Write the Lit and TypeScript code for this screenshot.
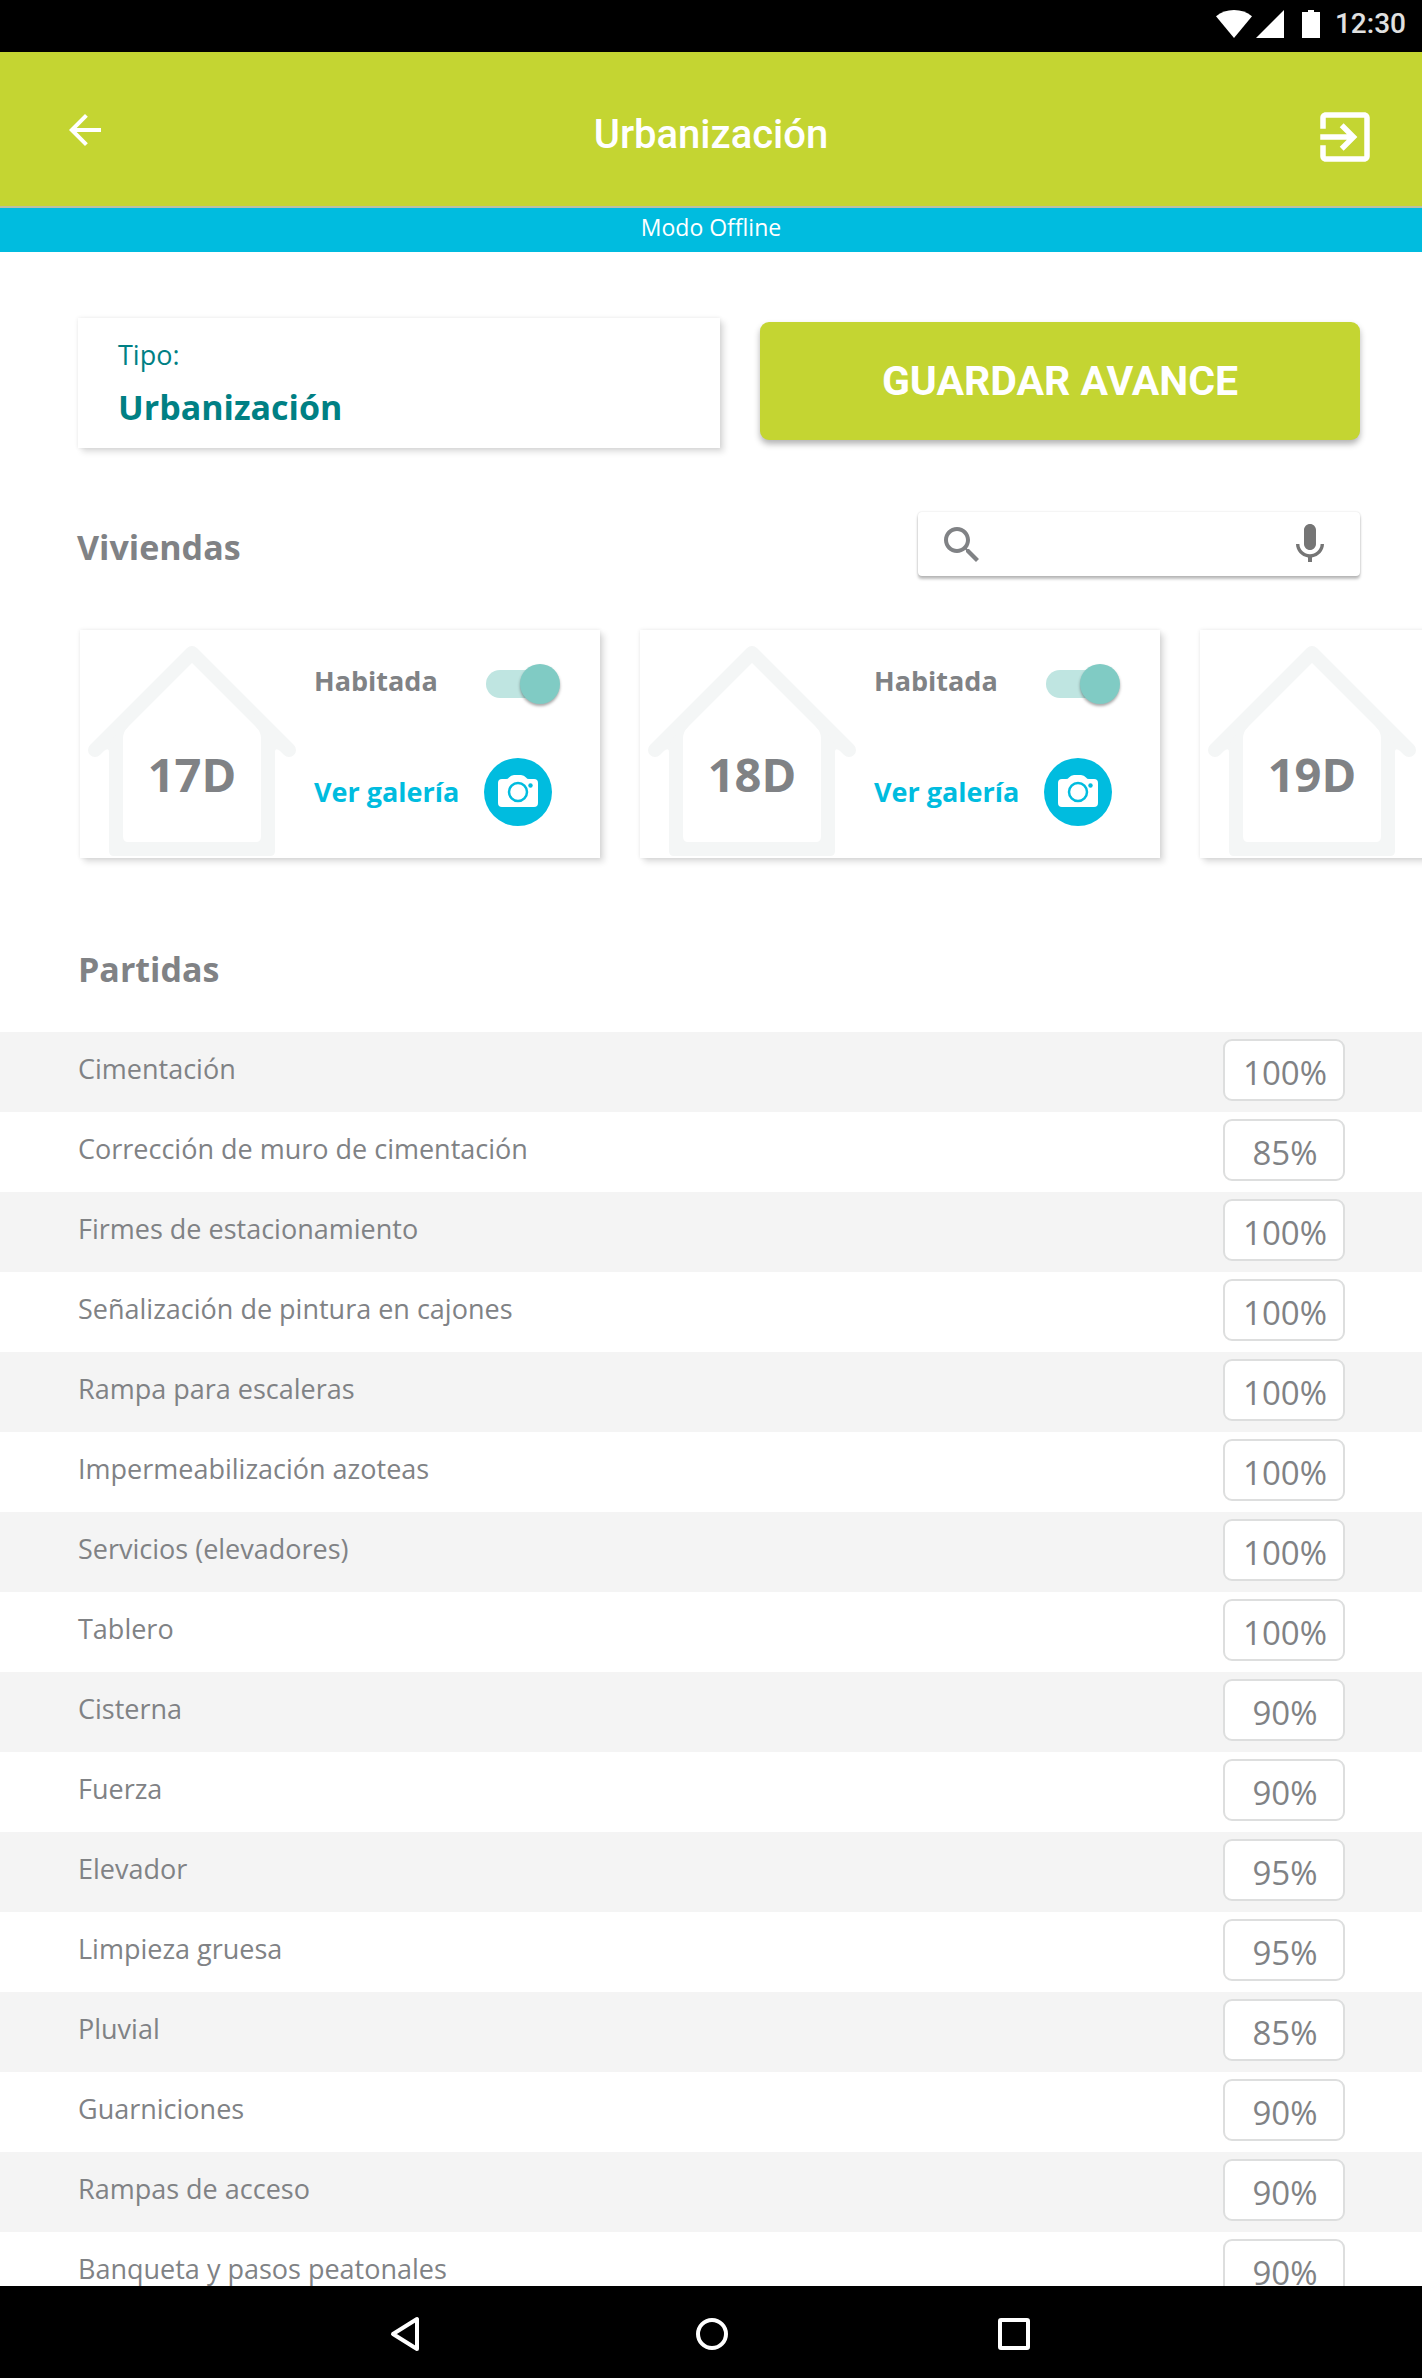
import { LitElement, html, css } from "lit";
import { customElement, property, state } from "lit/decorators.js";

interface Vivienda {
  id: string;
  habitada: boolean;
}

interface Partida {
  nombre: string;
  avance: string;
}

@customElement("status-bar")
export class StatusBar extends LitElement {
  static styles = css`
    :host {
      display: block;
      flex: none;
      background: #000;
      color: #e0e0e0;
    }
    .bar {
      display: flex;
      align-items: center;
      justify-content: flex-end;
      height: 52px;
      padding: 0 16px 4px 0;
      box-sizing: border-box;
      font: 500 28px/32px Roboto, sans-serif;
    }
    .wifi { margin-right: 4px; }
    .signal { margin-right: 18px; }
    .battery { margin-right: 15px; }
    svg { display: block; fill: #fff; }
  `;

  render() {
    return html`
      <div class="bar">
        <svg class="wifi" width="36" height="28" viewBox="0 0 36 28" aria-hidden="true">
          <path d="M18 28 0 6.2C5 2.2 11 0 18 0s13 2.2 18 6.2z" />
        </svg>
        <svg class="signal" width="28" height="28" viewBox="0 0 28 28" aria-hidden="true">
          <path d="M0 28h28V0z" />
        </svg>
        <svg class="battery" width="18" height="28" viewBox="0 0 18 28" aria-hidden="true">
          <path d="M0 2h6V0h6v2h6v26H0z" />
        </svg>
        <span>12:30</span>
      </div>
    `;
  }
}

@customElement("vivienda-card")
export class ViviendaCard extends LitElement {
  @property() name = "";
  @property({ type: Boolean }) habitada = false;

  static styles = css`
    :host {
      display: block;
      flex: none;
    }
    .card {
      display: flex;
      gap: 18px;
      width: 520px;
      height: 228px;
      box-sizing: border-box;
      padding-left: 8px;
      background: #fff;
      box-shadow: 4px 4px 6px rgba(0, 0, 0, 0.13), 0 0 4px rgba(0, 0, 0, 0.09);
      color: #808285;
      font: 700 27px/34px "Open Sans", sans-serif;
    }
    .house {
      display: grid;
      padding-top: 16px;
    }
    .house > * { grid-area: 1 / 1; }
    .number {
      justify-self: center;
      margin: 0;
      padding-top: 95px;
      font-size: 47px;
      line-height: 66px;
      font-weight: 700;
    }
    .controls {
      display: flex;
      flex-direction: column;
      gap: 54px;
      padding-top: 34px;
    }
    .switch,
    .gallery {
      display: grid;
      grid-template-columns: 170px auto;
      justify-items: start;
    }
    .gallery {
      align-items: center;
      color: #00bcdf;
      text-decoration: none;
    }
    .toggle {
      appearance: none;
      display: grid;
      align-items: center;
      width: 74px;
      height: 40px;
      margin: 0 0 0 2px;
    }
    .toggle::before,
    .toggle::after {
      content: "";
      grid-area: 1 / 1;
    }
    .toggle::before {
      width: 68px;
      height: 28px;
      border-radius: 14px;
      background: #d5d5d5;
    }
    .toggle::after {
      width: 40px;
      height: 40px;
      border-radius: 50%;
      background: #f1f1f1;
      box-shadow: 0 2px 3px rgba(0, 0, 0, 0.35);
    }
    .toggle:checked::before { background: #bfe5e1; }
    .toggle:checked::after {
      justify-self: end;
      background: #80cbc4;
    }
    svg { display: block; }
  `;

  render() {
    return html`
      <article class="card">
        <div class="house">
          <svg width="208" height="210" viewBox="0 0 208 210" aria-hidden="true">
            <path d="M7 104 104 7l97 97" fill="none" stroke="#f4f6f6" stroke-width="14"
              stroke-linecap="round" stroke-linejoin="round" />
            <path fill="#f4f6f6"
              d="M16 105q5-4 5 1v99q0 5 5 5h156q5 0 5-5v-99q0-5 5-1L160 60l8 21q5 5 5 11v98q0 6-5 6H40q-5 0-5-6V92q0-6 5-11l8-21z" />
          </svg>
          <h3 class="number">${this.name}</h3>
        </div>
        <div class="controls">
          <label class="switch">
            <span>Habitada</span>
            <input class="toggle" type="checkbox" role="switch" .checked=${this.habitada} />
          </label>
          <a class="gallery" href="#galeria">
            <span>Ver galería</span>
            <svg width="68" height="68" viewBox="0 0 68 68" aria-hidden="true">
              <circle cx="34" cy="34" r="34" fill="#00bcdf" />
              <path fill="#fff"
                d="M18 21h4q2 0 3-1.500q2-2.500 5-2.500h7q3 0 5 2.500q1 1.500 3 1.500h5q4 0 4 4v20q0 4-4 4H18q-4 0-4-4V25q0-4 4-4z" />
              <circle cx="34" cy="34" r="9" fill="none" stroke="#00bcdf" stroke-width="2.500" />
              <circle cx="46.500" cy="27.500" r="2.200" fill="#00bcdf" />
            </svg>
          </a>
        </div>
      </article>
    `;
  }
}

@customElement("app-root")
export class AppRoot extends LitElement {
  @state() private viviendas: Vivienda[] = [
    { id: "17D", habitada: true },
    { id: "18D", habitada: true },
    { id: "19D", habitada: true },
  ];

  @state() private partidas: Partida[] = [
    { nombre: "Cimentación", avance: "100%" },
    { nombre: "Corrección de muro de cimentación", avance: "85%" },
    { nombre: "Firmes de estacionamiento", avance: "100%" },
    { nombre: "Señalización de pintura en cajones", avance: "100%" },
    { nombre: "Rampa para escaleras", avance: "100%" },
    { nombre: "Impermeabilización azoteas", avance: "100%" },
    { nombre: "Servicios (elevadores)", avance: "100%" },
    { nombre: "Tablero", avance: "100%" },
    { nombre: "Cisterna", avance: "90%" },
    { nombre: "Fuerza", avance: "90%" },
    { nombre: "Elevador", avance: "95%" },
    { nombre: "Limpieza gruesa", avance: "95%" },
    { nombre: "Pluvial", avance: "85%" },
    { nombre: "Guarniciones", avance: "90%" },
    { nombre: "Rampas de acceso", avance: "90%" },
    { nombre: "Banqueta y pasos peatonales", avance: "90%" },
  ];

  static styles = css`
    :host {
      display: flex;
      flex-direction: column;
      height: 100vh;
      overflow: hidden;
      background: #fff;
      color: #808285;
      font-family: "Open Sans", sans-serif;
    }
    button {
      padding: 0;
      border: 0;
      background: none;
      color: inherit;
      font: inherit;
      cursor: pointer;
    }
    svg { display: block; }

    .appbar {
      flex: none;
      display: grid;
      grid-template-columns: 1fr auto 1fr;
      align-items: center;
      height: 156px;
      box-sizing: border-box;
      border-bottom: 2px solid #b9bfa4;
      background: #c4d532;
      color: #fff;
    }
    .appbar svg { fill: currentColor; }
    .back { justify-self: start; padding: 2px 0 0 61px; }
    .exit { justify-self: end; padding: 16px 44px 0 0; }
    .title {
      margin: 0;
      padding-top: 12px;
      font: 500 40px/48px Roboto, sans-serif;
    }
    .offline {
      flex: none;
      height: 44px;
      margin: 0;
      background: #00bcdf;
      color: #fff;
      font-size: 23px;
      line-height: 38px;
      text-align: center;
    }

    .content {
      flex: 1;
      min-height: 0;
      overflow: hidden;
    }
    .summary {
      display: grid;
      grid-template-columns: 107fr 100fr;
      align-items: center;
      gap: 40px;
      padding: 66px 62px 0 78px;
    }
    .type {
      height: 130px;
      padding: 17px 40px 0;
      box-sizing: border-box;
      box-shadow: 4px 4px 6px rgba(0, 0, 0, 0.13), 0 0 4px rgba(0, 0, 0, 0.09);
      color: #008084;
    }
    .type p { margin: 0; }
    .type-label { font-size: 27px; line-height: 40px; }
    .type-value { font-size: 34px; line-height: 64px; font-weight: 700; }
    .save {
      height: 118px;
      margin-bottom: 4px;
      border-radius: 9px;
      background: #c4d532;
      box-shadow: 0 4px 6px rgba(0, 0, 0, 0.3);
      color: #fff;
      font: 700 41px/50px Roboto, sans-serif;
    }

    .section-title {
      margin: 0;
      font-size: 34px;
      line-height: 50px;
      font-weight: 700;
    }
    .units-head {
      display: flex;
      align-items: center;
      justify-content: space-between;
      padding: 64px 62px 0 77px;
    }
    .units-head .section-title { padding-top: 6px; }
    .search {
      display: flex;
      align-items: center;
      width: 442px;
      height: 64px;
      padding: 0 26px 0 20px;
      box-sizing: border-box;
      border-radius: 4px;
      box-shadow: 0 3px 3px rgba(0, 0, 0, 0.26), 0 0 2px rgba(0, 0, 0, 0.16);
    }
    .search input {
      flex: 1;
      min-width: 0;
      height: 48px;
      padding: 0 8px;
      border: 0;
      outline: 0;
      background: none;
      color: inherit;
      font: 27px "Open Sans", sans-serif;
    }
    .search svg { fill: #757575; }
    .search > svg { padding-top: 2px; fill: #808285; }
    .units {
      display: flex;
      gap: 40px;
      padding: 54px 0 14px 80px;
      overflow: hidden;
    }
    .items-title { padding: 72px 78px 38px; }

    .items {
      width: 100%;
      border-collapse: collapse;
    }
    .items tr:nth-child(odd) { background: #f4f4f4; }
    .items th,
    .items td {
      height: 80px;
      padding: 0;
      box-sizing: border-box;
      vertical-align: top;
    }
    .items th {
      padding: 18px 0 0 78px;
      text-align: left;
      font-size: 27px;
      line-height: 38px;
      font-weight: 400;
    }
    .items td {
      width: 199px;
      padding-top: 7px;
    }
    .items input {
      display: block;
      width: 122px;
      height: 62px;
      padding: 4px 0 0 2px;
      box-sizing: border-box;
      border: 2px solid #dddede;
      border-radius: 9px;
      background: #fff;
      color: inherit;
      font: 400 33px "Open Sans", sans-serif;
      text-align: center;
    }

    .navbar {
      flex: none;
      display: flex;
      align-items: center;
      justify-content: center;
      gap: 262px;
      height: 92px;
      padding: 4px 0 0 2px;
      box-sizing: border-box;
      background: #000;
    }
    .navbar path,
    .navbar circle,
    .navbar rect {
      fill: none;
      stroke: #fff;
      stroke-width: 4;
      stroke-linejoin: round;
    }
  `;

  render() {
    return html`
      <status-bar></status-bar>
      <header class="appbar">
        <button class="back" aria-label="Volver">
          <svg width="48" height="48" viewBox="0 0 24 24">
            <path d="M20 11H7.830l5.590-5.590L12 4l-8 8 8 8 1.410-1.410L7.830 13H20v-2z" />
          </svg>
        </button>
        <h1 class="title">Urbanización</h1>
        <button class="exit" aria-label="Salir">
          <svg width="66" height="66" viewBox="0 0 24 24">
            <path d="M10.090 15.590L11.500 17l5-5-5-5-1.410 1.410L12.670 11H3v2h9.670l-2.580 2.590zM19 3H5c-1.110 0-2 .9-2 2v4h2V5h14v14H5v-4H3v4c0 1.100.890 2 2 2h14c1.100 0 2-.9 2-2V5c0-1.100-.9-2-2-2z" />
          </svg>
        </button>
      </header>
      <p class="offline">Modo Offline</p>

      <main class="content">
        <section class="summary">
          <div class="type">
            <p class="type-label">Tipo:</p>
            <p class="type-value">Urbanización</p>
          </div>
          <button class="save">GUARDAR AVANCE</button>
        </section>

        <section>
          <div class="units-head">
            <h2 class="section-title">Viviendas</h2>
            <div class="search">
              <svg width="48" height="48" viewBox="0 0 24 24" aria-hidden="true">
                <path d="M15.500 14h-.790l-.280-.270C15.410 12.590 16 11.110 16 9.500 16 5.910 13.090 3 9.500 3S3 5.910 3 9.500 5.910 16 9.500 16c1.610 0 3.090-.590 4.230-1.570l.270.280v.790l5 4.990L20.490 19l-4.990-5zm-6 0C7.010 14 5 11.990 5 9.500S7.010 5 9.500 5 14 7.010 14 9.500 11.990 14 9.500 14z" />
              </svg>
              <input type="search" aria-label="Buscar vivienda" />
              <button aria-label="Buscar por voz">
                <svg width="48" height="48" viewBox="0 0 24 24">
                  <path d="M12 15c1.660 0 2.990-1.340 2.990-3L15 5c0-1.660-1.340-3-3-3S9 3.340 9 5v7c0 1.660 1.340 3 3 3zm5.300-3c0 3-2.540 5.100-5.300 5.100S6.700 15 6.700 12H5c0 3.410 2.720 6.230 6 6.720V21h2v-2.280c3.280-.480 6-3.300 6-6.720h-1.700z" />
                </svg>
              </button>
            </div>
          </div>
          <div class="units">
            ${this.viviendas.map(
              (v) => html`<vivienda-card .name=${v.id} .habitada=${v.habitada}></vivienda-card>`
            )}
          </div>
        </section>

        <section>
          <h2 class="section-title items-title">Partidas</h2>
          <table class="items">
            <tbody>
              ${this.partidas.map(
                (p, i) => html`
                  <tr>
                    <th scope="row"><label for="partida-${i}">${p.nombre}</label></th>
                    <td><input id="partida-${i}" type="text" .value=${p.avance} /></td>
                  </tr>
                `
              )}
            </tbody>
          </table>
        </section>
      </main>

      <nav class="navbar">
        <button aria-label="Atrás">
          <svg width="40" height="40" viewBox="0 0 40 40"><path d="M27 5v30L3 20z" /></svg>
        </button>
        <button aria-label="Inicio">
          <svg width="40" height="40" viewBox="0 0 40 40"><circle cx="20" cy="20" r="14" /></svg>
        </button>
        <button aria-label="Recientes">
          <svg width="40" height="40" viewBox="0 0 40 40"><rect x="6" y="6" width="28" height="28" rx="1" /></svg>
        </button>
      </nav>
    `;
  }
}
